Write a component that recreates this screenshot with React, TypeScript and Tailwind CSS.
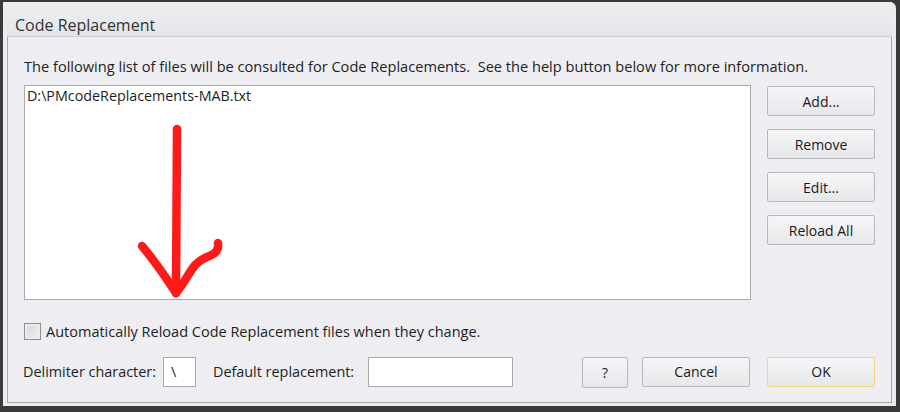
import React from "react";

const font = { fontFamily: '"Open Sans", "Noto Sans", sans-serif' };

function Btn({ label, ok }: { label: string; ok?: boolean }) {
  return (
    <button
      className={
        "h-[30px] w-[108px] rounded-[2px] border bg-gradient-to-b from-[#f6f6f8] to-[#e6e7ea] text-[14px] text-[#1a1a1a] " +
        (ok ? "border-[#f1d67a]" : "border-[#b8b8bc]")
      }
    >
      {label}
    </button>
  );
}

function Arrow() {
  return (
    <svg className="absolute left-[110px] top-[35px]" width="100" height="180" viewBox="0 0 100 180">
      <g fill="none" stroke="#ff1a1a" strokeWidth="8.5" strokeLinecap="round" strokeLinejoin="round">
        <path d="M42 8 L41 172" />
        <path d="M7 125 C18 138 30 155 41 172" />
        <path d="M83 122 C84 130 80 133 72 136 C62 140 58 146 52 156 C48 163 44 168 41 172" />
      </g>
    </svg>
  );
}

export default function App() {
  return (
    <div className="w-[900px] h-[412px] bg-[#3a3a3a] pt-[2px] pl-[3px] pr-[4px] pb-[6px]" style={font}>
      <div className="flex h-full flex-col rounded-tr-[6px] bg-[#ececef] px-[4px] pb-[3px]">
        <div className="flex h-[35px] shrink-0 items-center border-b border-[#cfcfd3] bg-gradient-to-b from-[#eeeff1] to-[#e4e5e8] pl-[8px] pt-[12px] text-[16px] text-[#333]">
          Code Replacement
        </div>
        <div className="flex flex-1 flex-col border-x border-b border-[#a7a7ab] bg-[#eeedf2] pl-[16px] pr-[16px]">
          <div className="mt-[19px] h-[20px] whitespace-nowrap text-[14.6px] leading-[20px] text-[#1e1e1e]">
            The following list of files will be consulted for Code Replacements.&nbsp; See the help button below for more information.
          </div>
          <div className="mt-[9px] flex gap-[16px]">
            <div className="relative h-[215px] flex-1 border border-[#a9a9ad] bg-white px-[2px] text-[14.3px] leading-[20px] text-[#1e1e1e]">
              D:\PMcodeReplacements-MAB.txt
              <Arrow />
            </div>
            <div className="mt-[1px] flex flex-col gap-[13px]">
              <Btn label="Add..." />
              <Btn label="Remove" />
              <Btn label="Edit..." />
              <Btn label="Reload All" />
            </div>
          </div>
          <div className="mt-[21px] flex items-center gap-[5px] whitespace-nowrap text-[14.5px] text-[#1e1e1e]">
            <span className="h-[17px] w-[17px] border border-[#8e8f8f] bg-gradient-to-br from-[#d4d4d8] to-[#f4f4f6] shadow-[inset_0_0_0_2px_#ececf0]" />
            Automatically Reload Code Replacement files when they change.
          </div>
          <div className="mt-[14px] flex items-center whitespace-nowrap text-[14.4px] text-[#1e1e1e]">
            <span className="ml-[-1px]">Delimiter character:</span>
            <div className="ml-[7px] flex h-[30px] w-[33px] items-center border border-[#a9a9ad] bg-white pl-[7px]">\</div>
            <span className="ml-[17px]">Default replacement:</span>
            <div className="ml-[14px] h-[30px] w-[145px] border border-[#a9a9ad] bg-white" />
            <div className="flex flex-1 justify-end gap-[14px]">
              <button className="h-[31px] w-[46px] rounded-[2px] border border-[#b8b8bc] bg-gradient-to-b from-[#f6f6f8] to-[#e6e7ea] text-[14px]">?</button>
              <Btn label="Cancel" />
              <div className="ml-[3px]">
                <Btn label="OK" ok />
              </div>
            </div>
          </div>
        </div>
      </div>
    </div>
  );
}
